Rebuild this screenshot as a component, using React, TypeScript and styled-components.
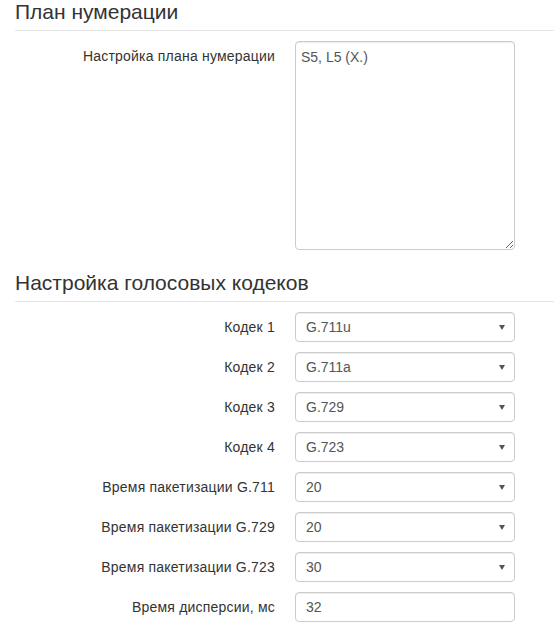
import { createGlobalStyle } from "styled-components";
import styled from "styled-components";

const GlobalStyle = createGlobalStyle`
    body {
        margin: 0;
        background: #fff;
        font-family: "Liberation Sans", Arial, sans-serif;
        font-size: 14px;
        color: #333;
    }
`;

const Page = styled.div`
    padding-left: 15px;
`;

const Legend = styled.div<{ $top: number }>`
    margin-top: ${(p) => p.$top}px;
    font-size: 21px;
    line-height: 24px;
    padding-bottom: 6px;
    border-bottom: 1px solid #e5e5e5;
    color: #333;
`;

const Fields = styled.div`
    display: flex;
    flex-direction: column;
    gap: 10px;
    padding-top: 10px;
`;

const Row = styled.div`
    display: grid;
    grid-template-columns: 260px 220px;
    column-gap: 20px;
    align-items: start;
`;

const Label = styled.label`
    text-align: right;
    padding-top: 7px;
    line-height: 16px;
    letter-spacing: 0.2px;
    color: #333;
`;

const controlBase = `
    box-sizing: border-box;
    width: 220px;
    border: 1px solid #ccc;
    border-radius: 4px;
    background: #fff;
    color: #555;
    font-family: "Liberation Sans", Arial, sans-serif;
    font-size: 14px;
    box-shadow: inset 0 1px 1px rgba(0, 0, 0, 0.075);
    outline: none;
`;

const Area = styled.textarea`
    ${controlBase}
    height: 209px;
    padding: 6px 5px;
    line-height: 18px;
    resize: vertical;
`;

const Input = styled.input`
    ${controlBase}
    height: 30px;
    padding: 0 10px;
`;

const SelectWrap = styled.div`
    position: relative;
    width: 220px;

    &::after {
        content: "";
        position: absolute;
        right: 10px;
        top: 13px;
        border-left: 3px solid transparent;
        border-right: 3px solid transparent;
        border-top: 5px solid #555;
        pointer-events: none;
    }
`;

const Select = styled.select`
    ${controlBase}
    height: 30px;
    padding: 0 10px;
    appearance: none;
    -webkit-appearance: none;
`;

const selects = [
    { label: "Кодек 1", value: "G.711u" },
    { label: "Кодек 2", value: "G.711a" },
    { label: "Кодек 3", value: "G.729" },
    { label: "Кодек 4", value: "G.723" },
    { label: "Время пакетизации G.711", value: "20" },
    { label: "Время пакетизации G.729", value: "20" },
    { label: "Время пакетизации G.723", value: "30" },
];

function App() {
    return (
        <Page>
            <GlobalStyle />
            <Legend $top={0}>План нумерации</Legend>
            <Fields>
                <Row>
                    <Label>Настройка плана нумерации</Label>
                    <Area defaultValue="S5, L5 (X.)" />
                </Row>
            </Fields>
            <Legend $top={21}>Настройка голосовых кодеков</Legend>
            <Fields>
                {selects.map((s, i) => (
                    <Row key={s.label + i}>
                        <Label>{s.label}</Label>
                        <SelectWrap>
                            <Select defaultValue={s.value}>
                                <option>{s.value}</option>
                            </Select>
                        </SelectWrap>
                    </Row>
                ))}
                <Row>
                    <Label>Время дисперсии, мс</Label>
                    <Input defaultValue="32" />
                </Row>
            </Fields>
        </Page>
    );
}

export default App;
